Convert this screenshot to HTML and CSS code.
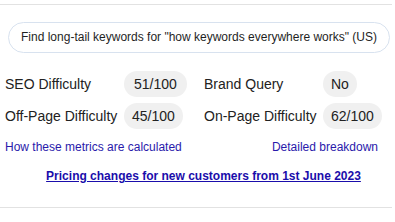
FILE: index.html
```html
<!DOCTYPE html>
<html>
<head>
<meta charset="utf-8">
<link rel="stylesheet" href="styles.css">
</head>
<body>
<div class="panel">
  <div class="divider divider-top"></div>
  <div class="query">Find long-tail keywords for "how keywords everywhere works" (US)</div>
  <div class="metrics">
    <span class="label">SEO Difficulty</span>
    <span class="value"><span class="pill pill-wide">51/100</span></span>
    <span class="label">Brand Query</span>
    <span class="value"><span class="pill">No</span></span>
    <span class="label">Off-Page Difficulty</span>
    <span class="value"><span class="pill">45/100</span></span>
    <span class="label">On-Page Difficulty</span>
    <span class="value"><span class="pill">62/100</span></span>
  </div>
  <div class="links">
    <a class="link" href="#">How these metrics are calculated</a>
    <a class="link" href="#">Detailed breakdown</a>
  </div>
  <div class="pricing"><a class="pricing-link" href="#">Pricing changes for new customers from 1st June 2023</a></div>
  <div class="divider divider-bottom"></div>
</div>
</body>
</html>
```
FILE: styles.css
```css
html, body {
  margin: 0;
  padding: 0;
  background: #ffffff;
}
body {
  font-family: "Liberation Sans", Arial, sans-serif;
  color: #222222;
  width: 395px;
  overflow: hidden;
}
.panel {
  display: flex;
  flex-direction: column;
}
.divider {
  height: 1px;
  background: #e2e2e2;
  width: 392px;
}
.divider-top {
  margin-top: 4px;
}
.query {
  margin: 17px 5px 0 8px;
  height: 29px;
  line-height: 29px;
  border: 1px solid #d8e2ef;
  border-radius: 16px;
  font-size: 12px;
  text-align: center;
  color: #1f1f1f;
  white-space: nowrap;
}
.metrics {
  display: grid;
  grid-template-columns: 119px 80px 119px auto;
  row-gap: 6px;
  align-items: center;
  margin-top: 18px;
  padding-left: 5px;
  font-size: 14px;
}
.label {
  color: #222222;
}
.value {
  display: flex;
}
.pill {
  display: inline-block;
  height: 26px;
  line-height: 26px;
  padding: 0 8px;
  border-radius: 13px;
  background: #f0f0f0;
  color: #222222;
}
.pill-wide {
  padding: 0 10px;
}
.links {
  display: flex;
  justify-content: space-between;
  margin-top: 11px;
  padding: 0 17px 0 5px;
  font-size: 12px;
}
.link {
  color: #2a1aab;
  text-decoration: none;
}
.pricing {
  margin-top: 15px;
  padding-left: 12px;
  text-align: center;
  font-size: 12px;
  font-weight: bold;
}
.pricing-link {
  color: #1a0dab;
  text-decoration: underline;
}
.divider-bottom {
  margin-top: 24px;
}
```
